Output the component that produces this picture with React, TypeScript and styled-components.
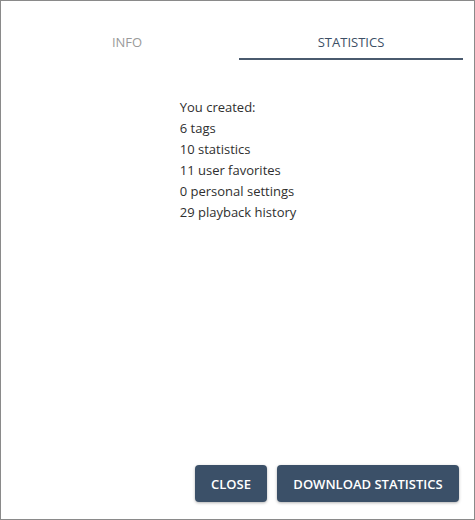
import React, { useState } from "react";
import styled, { createGlobalStyle } from "styled-components";

const GlobalStyle = createGlobalStyle`
  html, body {
    margin: 0;
    padding: 0;
    background: #ffffff;
  }
  body {
    font-family: "Open Sans", "Noto Sans", sans-serif;
  }
`;

const Dialog = styled.div`
  box-sizing: border-box;
  width: 475px;
  height: 520px;
  border: 1px solid #8a8a8a;
  display: flex;
  flex-direction: column;
  background: #ffffff;
`;

const TabBar = styled.div`
  display: flex;
  padding: 0 11px 0 14px;
`;

const Tab = styled.button<{ $active: boolean }>`
  flex: 1;
  height: 59px;
  padding: 25px 0 0;
  border: none;
  background: none;
  box-sizing: border-box;
  border-bottom: 2px solid ${(p) => (p.$active ? "#4a5a6e" : "transparent")};
  font-family: "Open Sans", "Noto Sans", sans-serif;
  font-size: 13px;
  line-height: 20px;
  color: ${(p) => (p.$active ? "#3d4f66" : "#9a9a9a")};
  text-align: center;
  align-self: flex-start;
  cursor: pointer;
`;

const Content = styled.div`
  display: flex;
  justify-content: center;
  padding: 37px 12px 0 13px;
`;

const Lines = styled.div`
  font-size: 13px;
  line-height: 21px;
  color: #2f2f2f;
`;

const Footer = styled.div`
  margin-top: auto;
  display: flex;
  justify-content: flex-end;
  gap: 10px;
  padding: 0 15px 17px 0;
`;

const Button = styled.button<{ $width: number }>`
  width: ${(p) => p.$width}px;
  height: 37px;
  padding: 0;
  border: none;
  border-radius: 4px;
  background: #3b5068;
  color: #ffffff;
  font-family: "Open Sans", "Noto Sans", sans-serif;
  font-size: 13px;
  font-weight: 600;
  box-shadow: 0 1px 3px rgba(0, 0, 0, 0.3);
  cursor: pointer;
`;

const lines = [
  "You created:",
  "6 tags",
  "10 statistics",
  "11 user favorites",
  "0 personal settings",
  "29 playback history",
];

const App: React.FC = () => {
  const [tab, setTab] = useState<string>("statistics");

  return (
    <>
      <GlobalStyle />
      <Dialog>
        <TabBar>
          <Tab $active={tab === "info"} onClick={() => setTab("info")}>
            INFO
          </Tab>
          <Tab $active={tab === "statistics"} onClick={() => setTab("statistics")}>
            STATISTICS
          </Tab>
        </TabBar>
        <Content>
          <Lines>
            {lines.map((line, index) => (
              <div key={index}>{line}</div>
            ))}
          </Lines>
        </Content>
        <Footer>
          <Button $width={72}>CLOSE</Button>
          <Button $width={182}>DOWNLOAD STATISTICS</Button>
        </Footer>
      </Dialog>
    </>
  );
};

export default App;
